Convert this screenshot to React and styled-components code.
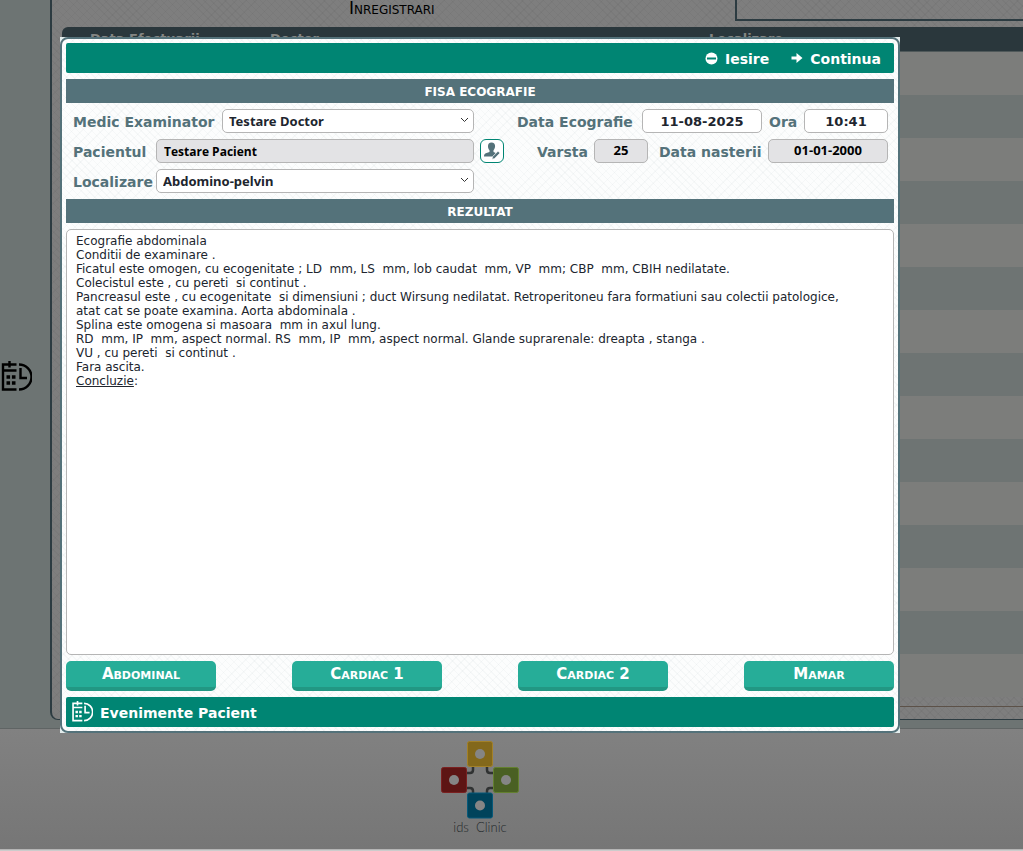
import { useState } from "react";
import styled, { createGlobalStyle } from "styled-components";

const GlobalStyle = createGlobalStyle`
  * {
    box-sizing: border-box;
  }

  body {
    margin: 0;
    background: #cccccc;
    font-family: "DejaVu Sans", Verdana, sans-serif;
    overflow: hidden;
  }
`;

const texture = (line) => `
  background-image:
    repeating-linear-gradient(45deg, ${line} 0 1px, transparent 1px 5px),
    repeating-linear-gradient(-45deg, ${line} 0 1px, transparent 1px 7px);
`;

const Page = styled.div`
  position: relative;
  border-bottom: 1px solid #b5b5b5;
`;

const Main = styled.div`
  display: flex;
  padding-bottom: 8px;
  background-color: #6d7473;
  border-bottom: 1px solid #5f6464;
`;

const Sidebar = styled.nav`
  width: 50px;
  padding-top: 361px;
`;

const SideLink = styled.a`
  display: block;
  color: #000000;
`;

const Panel = styled.section`
  flex: 1;
  min-width: 0;
  padding-left: 10px;
  padding-bottom: 12px;
  background-color: #7e7e7e;
  ${texture("rgba(0, 0, 0, 0.03)")}
  border-left: 2px solid #2c3b41;
  border-bottom: 1px solid #2c3b41;
  border-bottom-left-radius: 8px;
`;

const PanelTop = styled.div`
  display: flex;
  justify-content: space-between;
  height: 27px;
`;

const PanelTitle = styled.h2`
  margin: 0;
  padding-left: 287px;
  font-size: 17px;
  line-height: 16px;
  font-weight: 400;
  font-variant: small-caps;
`;

const SearchBox = styled.div`
  width: 288px;
  height: 21px;
  border: solid #2c3b41;
  border-width: 0 0 2px 2px;
`;

const Records = styled.table`
  width: 100%;
  border-collapse: separate;
  border-spacing: 0;
  table-layout: fixed;
  border-bottom: 1px solid #5c5148;
  padding-bottom: 9px;

  th {
    height: 25px;
    padding: 0 0 0 28px;
    background: #2a373c;
    border-bottom: 1px solid #50595a;
    color: #848684;
    font-size: 13px;
    line-height: 24px;
    text-align: left;
  }

  th:first-child {
    width: 180px;
    border-top-left-radius: 6px;
  }

  th:nth-child(2) {
    width: 439px;
  }

  td {
    height: 43px;
    padding: 0;
    background: #7c7d7b;
  }

  tr:nth-child(even) td {
    background: #6e7473;
  }
`;

const Footer = styled.footer`
  display: flex;
  justify-content: center;
  height: 120px;
  padding: 12px 63px 0 0;
  background: linear-gradient(#818181, #767676);
`;

const Brand = styled.div`
  display: flex;
  flex-direction: column;
  align-items: center;
  color: #24292b;
  font-family: Lato, sans-serif;
  font-size: 13px;
  line-height: 17px;
  font-weight: 300;
`;

const Overlay = styled.div`
  position: absolute;
  top: 0;
  left: 0;
  right: 0;
  padding: 37px 123px 0 60px;
`;

const Frame = styled.div`
  background: #e3ecec;
`;

const Dialog = styled.div`
  display: flex;
  flex-direction: column;
  gap: 6px;
  padding: 4px;
  border: 2px solid #54727a;
  border-radius: 8px;
  background-color: #fcfdfd;
  ${texture("rgba(84, 114, 122, 0.04)")}
`;

const Bar = styled.div`
  display: flex;
  align-items: center;
  justify-content: ${(props) => (props.$end ? "flex-end" : "flex-start")};
  gap: 22px;
  height: 30px;
  padding: ${(props) => (props.$end ? "0 13px" : "0 5px")};
  border-radius: 2px;
  background: #008573;
`;

const BarButton = styled.button`
  display: flex;
  align-items: center;
  gap: 7px;
  padding: 0;
  border: 0;
  background: none;
  color: #ffffff;
  font: bold 14px "DejaVu Sans", Verdana, sans-serif;
  cursor: pointer;

  span {
    padding-top: 2px;
  }
`;

const SectionTitle = styled.h3`
  height: 24px;
  margin: 0;
  background: #54727a;
  color: #ffffff;
  font-size: 12px;
  line-height: 26px;
  text-align: center;
`;

const Form = styled.form`
  display: grid;
  grid-template-columns: 1fr 24px 378px;
  gap: 6px;
  padding: 0 6px;
`;

const Group = styled.div`
  display: flex;
  justify-content: flex-end;
  grid-column: ${(props) => props.$column};
  height: 24px;
`;

const Label = styled.label`
  flex: none;
  width: ${(props) => props.$width}px;
  padding-left: 1px;
  color: #54727a;
  font-size: 14px;
  font-weight: 700;
  line-height: 26px;
  white-space: nowrap;
`;

const Input = styled.input`
  width: ${(props) => (props.$width ? `${props.$width}px` : "100%")};
  min-width: 0;
  height: 24px;
  margin-right: ${(props) => props.$after || 0}px;
  padding: 0 7px;
  border: 1px solid #b5b5b5;
  border-radius: 5px;
  background: #ffffff;
  color: #20252e;
  font: bold 13px "DejaVu Sans", Verdana, sans-serif;
  text-align: center;
  outline: none;

  &:read-only {
    background: #e3e3e5;
    color: #000000;
    font-family: "Open Sans", sans-serif;
    font-size: ${(props) => (props.$width ? "13px" : "12px")};
    text-align: ${(props) => (props.$width ? "center" : "left")};
    padding-bottom: ${(props) => (props.$width ? "3px" : "0")};
  }
`;

const Select = styled.select`
  flex: 1;
  min-width: 0;
  height: 24px;
  padding: 0 20px 0 6px;
  appearance: none;
  border: 1px solid #b5b5b5;
  border-radius: 5px;
  background: #ffffff
    url("data:image/svg+xml,%3Csvg xmlns='http://www.w3.org/2000/svg' width='9' height='6'%3E%3Cpath d='M1 1l3.5 3.5L8 1' fill='none' stroke='%23333'/%3E%3C/svg%3E")
    no-repeat right 4px top 7px;
  color: #20252e;
  font: bold 13px "Noto Sans", sans-serif;
  outline: none;
`;

const IconButton = styled.button`
  display: flex;
  align-items: center;
  justify-content: center;
  width: 24px;
  height: 24px;
  padding: 0;
  border: 1px solid #008573;
  border-radius: 6px;
  background: #ffffff;
  color: #54727a;
  cursor: pointer;
`;

const Editor = styled.div`
  min-height: 426px;
  padding: 4px 32px 4px 9px;
  border: 1px solid #b5b5b5;
  border-radius: 5px;
  background: #ffffff;
  color: #20252e;
  font-size: 12px;
  line-height: 14px;
  white-space: pre-wrap;
  outline: none;

  p {
    margin: 0;
  }
`;

const Templates = styled.div`
  display: flex;
  justify-content: space-between;
`;

const TemplateButton = styled.button`
  width: 150px;
  height: 30px;
  padding: 0;
  border: 0;
  border-bottom: 4px solid #229783;
  border-radius: 5px;
  background: #26ad98;
  color: #ffffff;
  font: small-caps bold 15px "DejaVu Sans", Verdana, sans-serif;
  cursor: pointer;
`;

const CalendarClock = ({ size }) => (
  <svg width={size} height={size} viewBox="0 0 32 32" fill="none" stroke="currentColor" strokeWidth="2.4" aria-hidden="true">
    <path d="M16.500 3.500H3v25h13.500M3 9.500h13.500M9.500 0v6.500" />
    <path d="M19 3.500a12.500 12.500 0 0 1 0 25M20.500 7v10h6.500" />
    <path d="M6.500 16h3.600M11.900 16h3.600M6.500 22h3.600M11.900 22h3.600" strokeWidth="3.600" />
  </svg>
);

const MinusCircle = () => (
  <svg width="13" height="13" viewBox="0 0 13 13" aria-hidden="true">
    <circle cx="6.5" cy="6.5" r="6" fill="#fff" />
    <path d="M2 6.5h9" stroke="#008573" strokeWidth="2" />
  </svg>
);

const ArrowRight = () => (
  <svg width="12" height="12" viewBox="0 0 12 12" aria-hidden="true">
    <path d="M0.5 4.500h5V1L11.500 6l-6 5V7.500h-5z" fill="#fff" />
  </svg>
);

const UserEdit = () => (
  <svg width="18" height="18" viewBox="0 0 18 18" fill="currentColor" aria-hidden="true">
    <path d="M8.500 0.500c2.300 0 3.700 1.500 3.600 3.800-.1 1.700-.8 3.100-1.600 3.900v1.900l2.300.9-3.300 3.500H1c0-2.300.6-3 2.500-3.600l3-1V8.200C5.600 7.400 5 6 5 4.300 4.900 2 6.200.5 8.500.5z" />
    <path d="M9 17.200l.7-2.600 5.300-5.400 1.900 1.900-5.300 5.400z" stroke="#fff" strokeWidth="0.600" />
  </svg>
);

const Logo = () => (
  <svg width="78" height="78" viewBox="0 0 78 78" aria-hidden="true">
    <path
      d="M32 25v4q0 3-3 3h-4M46 25v4q0 3 3 3h4M25 47h4q3 0 3 3v4M53 47h-4q-3 0-3 3v4"
      fill="none"
      stroke="#303232"
      strokeWidth="2.500"
    />
    <rect x="26.500" y="0.500" width="25" height="25" rx="2" fill="#83681b" stroke="#a38128" />
    <rect x="0.500" y="26.500" width="25" height="25" rx="2" fill="#5d1514" stroke="#7a2020" />
    <rect x="52.500" y="26.500" width="25" height="25" rx="2" fill="#4a6023" stroke="#63802f" />
    <rect x="26.500" y="52" width="25" height="25" rx="2" fill="#00435b" stroke="#07597a" />
    <g fill="#858585">
      <circle cx="39" cy="13" r="5" />
      <circle cx="13" cy="39" r="5" />
      <circle cx="65" cy="39" r="5" />
      <circle cx="39" cy="64.500" r="5" />
    </g>
  </svg>
);

const report = [
  "Ecografie abdominala",
  "Conditii de examinare .",
  "Ficatul este omogen, cu ecogenitate ; LD  mm, LS  mm, lob caudat  mm, VP  mm; CBP  mm, CBIH nedilatate.",
  "Colecistul este , cu pereti  si continut .",
  "Pancreasul este , cu ecogenitate  si dimensiuni ; duct Wirsung nedilatat. Retroperitoneu fara formatiuni sau colectii patologice, atat cat se poate examina. Aorta abdominala .",
  "Splina este omogena si masoara  mm in axul lung.",
  "RD  mm, IP  mm, aspect normal. RS  mm, IP  mm, aspect normal. Glande suprarenale: dreapta , stanga .",
  "VU , cu pereti  si continut .",
  "Fara ascita.",
];

const templates = ["Abdominal", "Cardiac 1", "Cardiac 2", "Mamar"];

const rows = Array.from({ length: 15 }, (_, i) => i);

const App = () => {
  const [date, setDate] = useState("11-08-2025");
  const [time, setTime] = useState("10:41");

  return (
    <Page>
      <GlobalStyle />
      <Main>
        <Sidebar>
          <SideLink href="#evenimente" aria-label="Evenimente">
            <CalendarClock size={32} />
          </SideLink>
        </Sidebar>
        <Panel>
          <PanelTop>
            <PanelTitle>Inregistrari</PanelTitle>
            <SearchBox />
          </PanelTop>
          <Records>
            <thead>
              <tr>
                <th>Data Efectuarii</th>
                <th>Doctor</th>
                <th>Localizare</th>
              </tr>
            </thead>
            <tbody>
              {rows.map((r) => (
                <tr key={r}>
                  <td colSpan={3} />
                </tr>
              ))}
            </tbody>
          </Records>
        </Panel>
      </Main>
      <Footer>
        <Brand>
          <Logo />
          ids&nbsp; Clinic
        </Brand>
      </Footer>

      <Overlay>
        <Frame>
          <Dialog role="dialog" aria-label="Fisa ecografie">
            <Bar $end>
              <BarButton type="button">
                <MinusCircle />
                <span>Iesire</span>
              </BarButton>
              <BarButton type="button">
                <ArrowRight />
                <span>Continua</span>
              </BarButton>
            </Bar>
            <SectionTitle>FISA ECOGRAFIE</SectionTitle>
            <Form>
              <Group $column={1}>
                <Label htmlFor="medic" $width={150}>Medic Examinator</Label>
                <Select id="medic">
                  <option>Testare Doctor</option>
                </Select>
              </Group>
              <Group $column={3}>
                <Label htmlFor="data" $width={126}>Data Ecografie</Label>
                <Input
                  id="data"
                  $width={120}
                  $after={6}
                  value={date}
                  onChange={(e) => setDate(e.target.value)}
                />
                <Label htmlFor="ora" $width={36}>Ora</Label>
                <Input id="ora" $width={84} value={time} onChange={(e) => setTime(e.target.value)} />
              </Group>
              <Group $column={1}>
                <Label htmlFor="pacient" $width={84}>Pacientul</Label>
                <Input id="pacient" value="Testare Pacient" readOnly />
              </Group>
              <IconButton type="button" aria-label="Editare pacient">
                <UserEdit />
              </IconButton>
              <Group $column={3}>
                <Label htmlFor="varsta" $width={58}>Varsta</Label>
                <Input id="varsta" $width={54} $after={10} value="25" readOnly />
                <Label htmlFor="nastere" $width={110}>Data nasterii</Label>
                <Input id="nastere" $width={120} value="01-01-2000" readOnly />
              </Group>
              <Group $column={1}>
                <Label htmlFor="localizare" $width={84}>Localizare</Label>
                <Select id="localizare">
                  <option>Abdomino-pelvin</option>
                </Select>
              </Group>
            </Form>
            <SectionTitle>REZULTAT</SectionTitle>
            <Editor
              role="textbox"
              aria-multiline="true"
              aria-label="Rezultat"
              contentEditable
              suppressContentEditableWarning
              spellCheck={false}
            >
              {report.map((line) => (
                <p key={line}>{line}</p>
              ))}
              <p>
                <u>Concluzie</u>:
              </p>
            </Editor>
            <Templates>
              {templates.map((t) => (
                <TemplateButton type="button" key={t}>
                  {t}
                </TemplateButton>
              ))}
            </Templates>
            <Bar>
              <BarButton type="button">
                <CalendarClock size={22} />
                <span>Evenimente Pacient</span>
              </BarButton>
            </Bar>
          </Dialog>
        </Frame>
      </Overlay>
    </Page>
  );
};

export default App;
